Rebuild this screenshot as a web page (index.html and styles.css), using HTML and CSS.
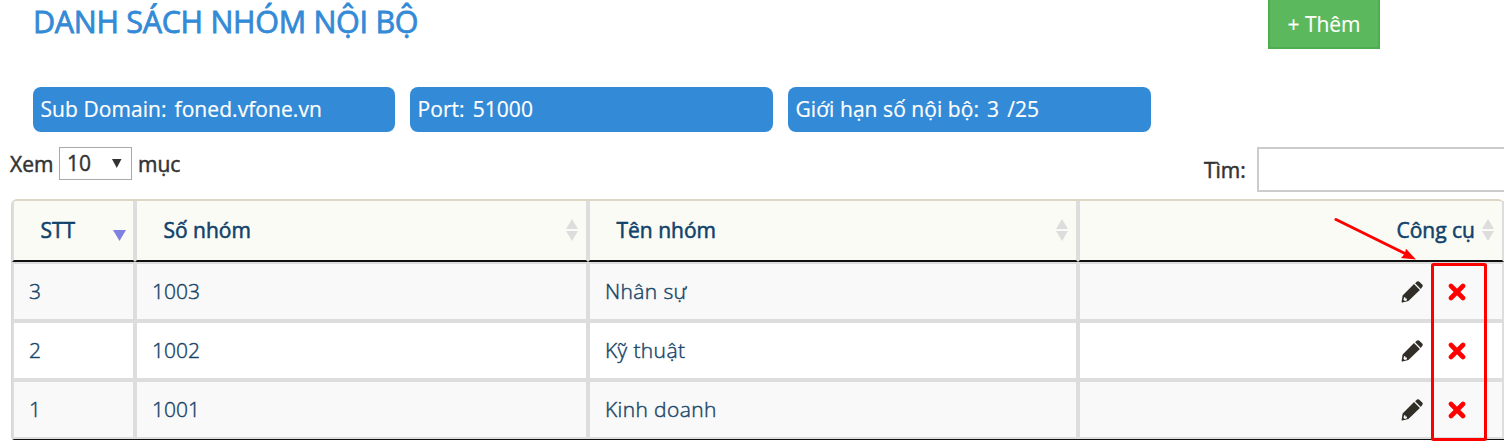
FILE: index.html
```html
<!DOCTYPE html>
<html lang="vi">
<head>
<meta charset="utf-8">
<title>Danh sách nhóm nội bộ</title>
<link rel="stylesheet" href="styles.css">
</head>
<body>
<svg class="defs" width="0" height="0">
  <symbol id="sort" viewBox="0 0 14 22"><path d="M7 0L13 10H1ZM1 12H13L7 22Z"/></symbol>
  <symbol id="pencil" viewBox="0 0 22 22"><path fill-rule="evenodd" d="M13 3.1L18.9 9L7.4 20L1.4 21.4Q.5 21.6 .6 20.7L1.6 14.4ZM3.2 16.2L2.4 18.7L3.8 19.9L6 19.2L5.8 17.6L4.4 17.4L4.2 16Z"/><path d="M14.1 2.2L16 .6Q17.3 -.3 18.6 .9L21.2 3.4Q22.3 4.6 21.2 5.9L19.8 7.9Z"/></symbol>
  <symbol id="cross" viewBox="0 0 18 18"><path d="M3 3L15 15M15 3L3 15"/></symbol>
</svg>
<header class="top">
  <h1 class="title">DANH SÁCH NHÓM NỘI BỘ</h1>
  <button class="add">+ Thêm</button>
</header>
<section class="info">
  <div class="pill"><span>Sub Domain:</span><span>foned.vfone.vn</span></div>
  <div class="pill"><span>Port:</span><span>51000</span></div>
  <div class="pill"><span>Giới hạn số nội bộ:</span><span>3</span><span>/25</span></div>
</section>
<section class="controls">
  <div class="length"><span class="xem">Xem</span><div class="select"><span>10</span><svg width="10" height="9"><path d="M0 0H9.5L4.75 9Z"/></svg></div><span class="muc">mục</span></div>
  <label class="search"><span>Tìm:</span><input class="field" type="text"></label>
</section>
<main class="table">
  <div class="row head">
    <div class="cell"><span class="stt">STT</span><svg class="desc" width="13" height="11"><path d="M0 0H13L6.5 11Z"/></svg></div>
    <div class="cell"><span class="so">Số nhóm</span><svg class="sort"><use href="#sort"/></svg></div>
    <div class="cell"><span class="ten">Tên nhóm</span><svg class="sort"><use href="#sort"/></svg></div>
    <div class="cell tools"><span class="cong">Công cụ</span><svg class="sort"><use href="#sort"/></svg></div>
  </div>
  <div class="row odd"><div class="cell">3</div><div class="cell">1003</div><div class="cell">Nhân sự</div><div class="cell actions"><svg class="pencil"><use href="#pencil"/></svg><svg class="cross"><use href="#cross"/></svg></div></div>
  <div class="row"><div class="cell">2</div><div class="cell">1002</div><div class="cell">Kỹ thuật</div><div class="cell actions"><svg class="pencil"><use href="#pencil"/></svg><svg class="cross"><use href="#cross"/></svg></div></div>
  <div class="row odd"><div class="cell">1</div><div class="cell">1001</div><div class="cell">Kinh doanh</div><div class="cell actions"><svg class="pencil"><use href="#pencil"/></svg><svg class="cross"><use href="#cross"/></svg></div></div>
</main>
<svg class="marks" width="1504" height="442">
  <path d="M1336 219.5L1406 254" stroke="red" stroke-width="3" stroke-linecap="round"/>
  <path d="M1416 259.5L1401 258L1404.6 254L1406 248.8Z" fill="red"/>
  <rect x="1432.5" y="264.5" width="53" height="175" rx="1" fill="none" stroke="red" stroke-width="3"/>
</svg>
</body>
</html>
```
FILE: styles.css
```css
* { box-sizing: border-box; }
body { margin: 0; width: 1504px; height: 442px; overflow: hidden; position: relative; background: #fff; font-family: "Open Sans", "Noto Sans", sans-serif; font-size: 21px; color: #333; }
svg { display: block; flex: none; }
.defs { position: absolute; }
.top { display: flex; justify-content: space-between; height: 87px; padding: 0 124px 0 33px; }
.title { margin: 0; font-size: 30.5px; line-height: 43px; font-weight: 400; letter-spacing: -.3px; color: #338ad6; -webkit-text-stroke: .8px #338ad6; white-space: nowrap; }
.add { width: 112px; height: 49px; padding: 0; border: 2px solid #4cae4c; border-top: 0; background: #5cb85c; color: #fff; font: 21px/46px "Open Sans", sans-serif; -webkit-text-stroke: .15px #fff; }
.info { display: grid; grid-template-columns: 362px 363px 363px; gap: 15px; padding-left: 33px; }
.pill { display: flex; gap: 8px; height: 45px; padding-left: 7.5px; border-radius: 8px; background: #338ad6; color: #fff; line-height: 45px; letter-spacing: .06px; white-space: nowrap; -webkit-text-stroke: .2px #fff; }
.controls { display: flex; justify-content: space-between; height: 67px; padding-left: 10px; -webkit-text-stroke: .5px #333; }
.length { display: flex; height: 33px; margin-top: 15px; line-height: 35px; }
.xem { width: 49px; }
.select { display: flex; align-items: center; justify-content: space-between; width: 73px; height: 33px; padding: 0 9px 0 7px; border: 1px solid #a9a9a9; line-height: 31px; -webkit-text-stroke: .4px #333; }
.select svg { fill: #333; }
.muc { margin-left: 6px; }
.search { display: flex; margin-top: 15px; line-height: 47px; }
.search span { width: 53px; }
.field { width: 247px; height: 45px; padding: 0; border: 2px solid #ccc; border-right: 0; background: #fff; }
.table { margin-left: 11px; border-top: 2px solid #ddd6c5; border-left: 1px solid #ddd6c5; border-bottom: 1px solid #111; border-radius: 6px 6px 0 4px; color: #11426b; }
.row { display: grid; grid-template-columns: 123px 453px 490px 426px; height: 59px; font-weight: 300; }
.cell { display: flex; align-items: center; padding: 0 15px 2px; border: 2px solid #ddd; -webkit-text-stroke: .45px #1c4867; }
.cell:nth-child(3) { letter-spacing: .38px; }
.odd { background: #f9f9f9; }
.head { height: 61px; background: #fafbf4; font-weight: 400; border-radius: 5px 6px 0 0; }
.head .cell { justify-content: space-between; padding: 0 7px 0 26.5px; border-top: 0; border-bottom: 2px solid #111; letter-spacing: 0; -webkit-text-stroke: .55px #11426b; }
.head .cell span { margin-bottom: 1px; }
.head .tools { justify-content: flex-end; gap: 6px; }
.sort { width: 14px; height: 22px; margin-top: -1px; fill: #ddd; }
.desc { margin-top: 10px; fill: #8080e0; }
.row .actions { justify-content: flex-end; gap: 25.5px; padding: 0 36px 0 0; }
.pencil { width: 22px; height: 22px; fill: #302e27; }
.cross { width: 18px; height: 18px; stroke: red; stroke-width: 4.6; stroke-linecap: round; }
.marks { position: absolute; left: 0; top: 0; }
```
